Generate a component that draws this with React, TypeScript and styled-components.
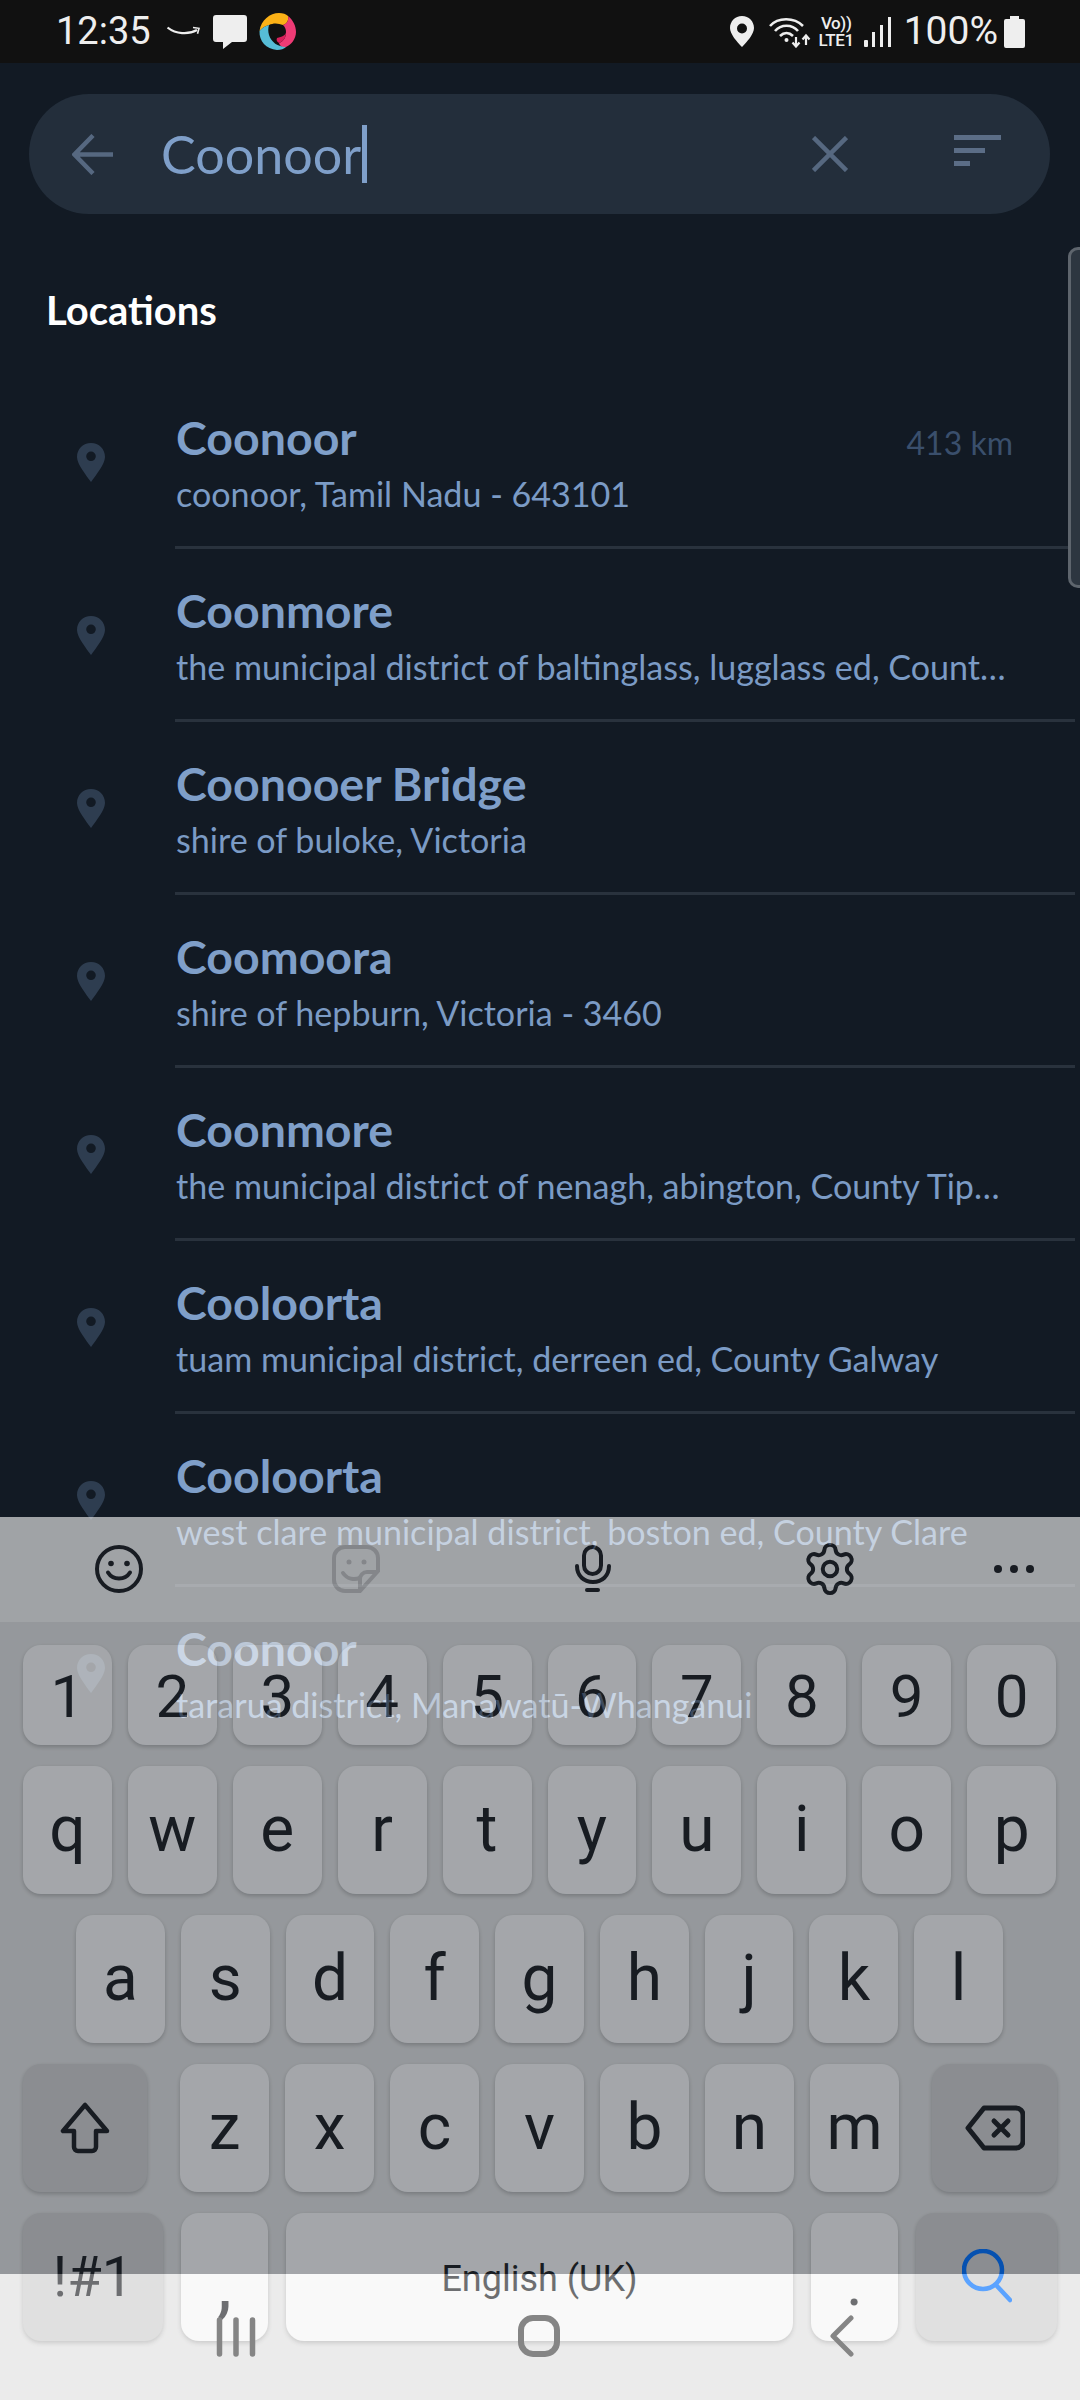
import React from "react";
import styled, { createGlobalStyle } from "styled-components";
import { Settings } from "lucide-react";

const Global = createGlobalStyle`
  html, body { margin: 0; padding: 0; background: #121a24; }
  body { width: 1080px; height: 2400px; overflow: hidden; font-family: "Lato", sans-serif; }
  * { box-sizing: border-box; }
`;

const Screen = styled.div`
  position: relative; width: 1080px; height: 2400px; overflow: hidden;
  display: flex; flex-direction: column; background: #121a24;
`;

/* status bar */
const StatusBar = styled.div`
  flex: 0 0 63px; height: 63px; background: #111111; display: flex; align-items: center;
  padding: 0 55px 0 56px; color: #eeeeee; font-family: "Roboto", sans-serif;
`;
const Clock = styled.span`font-size: 38px; line-height: 63px; margin-right: 18px; width: 93px;`;
const StatusLeft = styled.div`display: flex; align-items: center; gap: 13px;`;
const StatusRight = styled.div`margin-left: auto; display: flex; align-items: center;`;
const Percent = styled.span`font-size: 39px; line-height: 63px; margin: 0 6px 0 13px;`;
const Volte = styled.div`
  display: flex; flex-direction: column; align-items: center; width: 39px; margin-left: 6px;
  font-size: 17px; font-weight: 500; line-height: 17px; letter-spacing: -0.4px; margin-top: 1px;
`;

/* search */
const Content = styled.main`flex: 1 1 auto; display: flex; flex-direction: column; position: relative; overflow: hidden;`;
const SearchPill = styled.div`
  margin: 31px 0 0 29px; width: 1021px; height: 120px; border-radius: 60px; background: #232e3b;
  display: flex; align-items: center; position: relative; flex: 0 0 120px;
`;
const BackSlot = styled.div`width: 132px; padding-left: 43px; display: flex;`;
const Query = styled.div`
  font-size: 52px; color: #7f9fc9; line-height: 60px; display: flex; align-items: center; flex: 1;
`;
const Caret = styled.span`width: 5px; height: 58px; background: #7f9fc9; margin-left: 1px;`;
const ClearSlot = styled.div`width: 36px; margin-right: 106px; display: flex;`;
const FilterSlot = styled.div`width: 47px; margin-right: 49px; display: flex; flex-direction: column; gap: 8px; margin-top: -7px;`;
const FilterBar = styled.span<{ $w: number }>`display: block; height: 5px; width: ${p => p.$w}px; background: #5b6d86;`;

const Heading = styled.h2`
  margin: 73px 0 0 46px; font-size: 40px; font-weight: 700; color: #ffffff; line-height: 46px; height: 46px;
`;
const List = styled.div`display: flex; flex-direction: column; margin-top: 43px;`;
const Row = styled.div`display: flex; height: 173px; align-items: stretch;`;
const PinCell = styled.div`flex: 0 0 175px; padding-left: 77px; display: flex; align-items: center;`;
const RowBody = styled.div<{ $last?: boolean }>`
  flex: 1; min-width: 0; margin-right: 5px; padding: 33px 62px 0 1px;
  border-bottom: 3px solid ${p => (p.$last ? "transparent" : "#29323d")};
`;
const TitleLine = styled.div`display: flex; justify-content: space-between; align-items: baseline;`;
const Title = styled.div`font-size: 46.5px; font-weight: 700; color: #7f9fc9; line-height: 56px;`;
const Distance = styled.div`font-size: 32px; color: #3a4f6c; line-height: 40px; padding-top: 2px;`;
const Sub = styled.div`
  margin-top: 7px; font-size: 34.1px; color: #7b9bc5; line-height: 44px;
  white-space: nowrap; overflow: hidden; text-overflow: ellipsis;
`;

const ScrollThumb = styled.div`
  position: absolute; right: 0; top: 184px; width: 12px; height: 341px;
  background: #2d3640; border: 3px solid #5e656d; border-right: 0; border-radius: 10px 0 0 10px;
`;

/* bottom strip under keyboard */
const NavStrip = styled.div`flex: 0 0 126px; background: #ffffff;`;

/* keyboard, translucent over everything below */
const Keyboard = styled.div`
  position: absolute; left: 0; right: 0; top: 1517px; bottom: 0; opacity: 0.64; background: #e0e0e0;
  display: flex; flex-direction: column; font-family: "Roboto", sans-serif; color: #1c1e22;
`;
const Toolbar = styled.div`flex: 0 0 105px; background: #f0f0f0; display: flex; align-items: center; padding-bottom: 2px;`;
const ToolCell = styled.div<{ $w: number }>`
  flex: 0 0 ${p => p.$w}px; display: flex; justify-content: center; align-items: center; color: #1c1e22;
`;
const Rows = styled.div`display: flex; flex-direction: column; gap: 21px; padding-top: 23px;`;
const KeyRow = styled.div<{ $left: number; $right: number; $gap?: number }>`
  display: flex; gap: ${p => p.$gap ?? 16}px; padding: 0 ${p => p.$right}px 0 ${p => p.$left}px;
`;
const Key = styled.div<{ $h?: number; $w?: number; $dark?: boolean; $size?: number; $ml?: number; $drop?: number }>`
  flex: ${p => (p.$w ? `0 0 ${p.$w}px` : "1 1 0")};
  height: ${p => p.$h ?? 128}px; border-radius: 18px;
  margin-left: ${p => p.$ml ?? 0}px;
  padding-top: ${p => p.$drop ?? 0}px;
  background: ${p => (p.$dark ? "#cfcfcf" : "#f6f6f6")};
  box-shadow: 0 2px 4px rgba(0, 0, 0, 0.22);
  display: flex; align-items: center; justify-content: center;
  font-size: ${p => p.$size ?? 64}px; line-height: 1;
`;
const KeyGroup = styled.div`flex: 0 0 719px; display: flex; gap: 16px; margin-left: 33px;`;
const SpaceLabel = styled.span`font-size: 36px; padding-top: 4px;`;

const NavIcons = styled.div`
  position: absolute; left: 0; right: 0; bottom: 0; height: 126px; padding: 41px 0 0 84px;
  display: flex; align-items: flex-start;
`;
const NavCell = styled.div`flex: 0 0 303px; display: flex; justify-content: center;`;

const Pin = () => (
  <svg width="28" height="39" viewBox="0 0 28 39">
    <path fillRule="evenodd" d="M14 0C6 0 0 6 0 14c0 7 9 18 14 25 5-7 14-18 14-25C28 6 22 0 14 0zm0 8.500a4.800 4.800 0 1 1 0 9.600 4.800 4.800 0 0 1 0-9.600z" fill="#2e3d50" />
  </svg>
);

const rows = [
  { t: "Coonoor", s: "coonoor, Tamil Nadu - 643101", d: "413 km" },
  { t: "Coonmore", s: "the municipal district of baltinglass, lugglass ed, County Wicklow" },
  { t: "Coonooer Bridge", s: "shire of buloke, Victoria" },
  { t: "Coomoora", s: "shire of hepburn, Victoria - 3460" },
  { t: "Coonmore", s: "the municipal district of nenagh, abington, County Tipperary" },
  { t: "Cooloorta", s: "tuam municipal district, derreen ed, County Galway" },
  { t: "Cooloorta", s: "west clare municipal district, boston ed, County Clare" },
  { t: "Coonoor", s: "tararua district, Manawatū-Whanganui" },
];

const numbers = "1234567890".split("");
const top = "qwertyuiop".split("");
const mid = "asdfghjkl".split("");
const low = "zxcvbnm".split("");

export default function App() {
  return (
    <Screen>
      <Global />
      <StatusBar>
        <Clock>12:35</Clock>
        <StatusLeft>
          <svg width="33" height="12" viewBox="0 0 33 12" fill="none" stroke="#eee">
            <path d="M0.5 1.5C9 8 21 9 30 4" strokeWidth="2.2" />
            <path d="M26 1.5l6 .8-1.500 5.500" strokeWidth="1.6" />
          </svg>
          <svg width="34" height="34" viewBox="0 0 34 34">
            <path d="M3 0h28a3 3 0 0 1 3 3v21a3 3 0 0 1-3 3H19l-9 7v-7H3a3 3 0 0 1-3-3V3a3 3 0 0 1 3-3z" fill="#eeeeee" />
          </svg>
          <svg width="37" height="37" viewBox="0 0 37 37" style={{ marginLeft: -1 }}>
            <path d="M0.500 18C2 7 11 0 20 0c4 0 7 1 9 3 1 4-1 8-5 9-5-2-10-2-14 0-4 1-7 3-9.500 6z" fill="#fbb116" />
            <path d="M29 3c5 4 8 10 8 16 0 7-5 13-10 15-4 1-6-1-7-4 5-2 7-6 7-11 0-3-1-5-3-7 4-1 6-5 5-9z" fill="#ee3b75" />
            <path d="M20 30c5-2 7-6 7-11 0 3-4 5-9 6-1 2 0 4 2 5z" fill="#d81f5a" />
            <path d="M0.500 18C0 28 7 36 18 37c4 0 7-1 9-3-8 0-15-5-17-12-1-3-1-7 0-10-4 1-7 3-9.500 6z" fill="#56bcd6" />
          </svg>
        </StatusLeft>
        <StatusRight>
          <svg width="24" height="31" viewBox="0 0 24 31">
            <path fillRule="evenodd" d="M12 0C5 0 0 5.500 0 12c0 6 7 14 12 19 5-5 12-13 12-19C24 5.500 19 0 12 0zm0 7.500a5 5 0 1 1 0 10 5 5 0 0 1 0-10z" fill="#eeeeee" />
          </svg>
          <svg width="42" height="32" viewBox="0 0 42 32" fill="none" stroke="#eee" strokeWidth="2.600" style={{ marginLeft: 15 }}>
            <path d="M1 10C9 1 25 1 34 10" />
            <path d="M6 15C12 8 23 8 29 15" />
            <path d="M11 20c4-4 9-4 13 0" />
            <circle cx="17.500" cy="24" r="2" fill="#eee" stroke="none" />
            <path d="M27 21v9M23.500 26.500l3.500 4 3.500-4M37 29v-9M33.500 23.500l3.500-4 3.500 4" strokeWidth="2.200" />
          </svg>
          <Volte>
            <span>Vo))</span>
            <span>LTE1</span>
          </Volte>
          <svg width="27" height="30" viewBox="0 0 27 30" fill="#eee" style={{ marginLeft: 8 }}>
            <rect x="0" y="23" width="4" height="7" rx="1" />
            <rect x="8" y="15" width="3" height="15" />
            <rect x="16" y="8" width="3" height="22" />
            <rect x="24" y="0" width="3" height="30" />
          </svg>
          <Percent>100%</Percent>
          <svg width="21" height="32" viewBox="0 0 21 32" fill="#eeeeee">
            <path d="M6 0h9v3h4a2 2 0 0 1 2 2v25a2 2 0 0 1-2 2H2a2 2 0 0 1-2-2V5a2 2 0 0 1 2-2h4z" />
          </svg>
        </StatusRight>
      </StatusBar>

      <Content>
        <SearchPill>
          <BackSlot>
            <svg width="41" height="41" viewBox="0 0 41 41" fill="none" stroke="#566880" strokeWidth="4.500">
              <path d="M41 20.500H3M21 1.500L2.500 20.500 21 39.500" />
            </svg>
          </BackSlot>
          <Query>
            Coonoor<Caret />
          </Query>
          <ClearSlot>
            <svg width="36" height="36" viewBox="0 0 36 36" fill="none" stroke="#566880" strokeWidth="4.500">
              <path d="M1.500 1.500l33 33M34.500 1.500l-33 33" />
            </svg>
          </ClearSlot>
          <FilterSlot>
            <FilterBar $w={47} />
            <FilterBar $w={31} />
            <FilterBar $w={16} />
          </FilterSlot>
        </SearchPill>
        <Heading>Locations</Heading>
        <List>
          {rows.map((r, i) => (
            <Row key={i}>
              <PinCell>
                <Pin />
              </PinCell>
              <RowBody $last={i === rows.length - 1}>
                <TitleLine>
                  <Title>{r.t}</Title>
                  {r.d && <Distance>{r.d}</Distance>}
                </TitleLine>
                <Sub>{r.s}</Sub>
              </RowBody>
            </Row>
          ))}
        </List>
        <ScrollThumb />
      </Content>
      <NavStrip />

      <Keyboard>
        <Toolbar>
          <ToolCell $w={237}>
            <svg width="50" height="50" viewBox="0 0 50 50" fill="none" stroke="currentColor" strokeWidth="4">
              <circle cx="25" cy="25" r="22" />
              <circle cx="17" cy="19.500" r="2.800" fill="currentColor" stroke="none" />
              <circle cx="33" cy="19.500" r="2.800" fill="currentColor" stroke="none" />
              <path d="M14 28.500c5 8 17 8 22 0" strokeLinecap="round" />
            </svg>
          </ToolCell>
          <ToolCell $w={237}>
            <svg width="48" height="48" viewBox="0 0 48 48" fill="none" stroke="#c4c4c4" strokeWidth="4">
              <path d="M13 2h22a11 11 0 0 1 11 11v13L28 46H13A11 11 0 0 1 2 35V13A11 11 0 0 1 13 2z" />
              <path d="M45 27H35a7 7 0 0 0-7 7v11" />
              <circle cx="17" cy="17" r="2.500" fill="#c4c4c4" stroke="none" />
              <circle cx="32" cy="17" r="2.500" fill="#c4c4c4" stroke="none" />
              <path d="M11 28c4 6 11 7 17 5" strokeLinecap="round" />
            </svg>
          </ToolCell>
          <ToolCell $w={237}>
            <svg width="36" height="48" viewBox="0 0 36 48" fill="none" stroke="currentColor" strokeWidth="4" strokeLinecap="round">
              <rect x="9" y="2" width="17" height="27" rx="8.500" />
              <path d="M2 21c0 10 7 16 16 16s16-6 16-16" />
              <path d="M12 45h11" />
            </svg>
          </ToolCell>
          <ToolCell $w={237}>
            <Settings size={58} strokeWidth={1.65} />
          </ToolCell>
          <ToolCell $w={132}>
            <svg width="40" height="10" viewBox="0 0 40 10" fill="currentColor">
              <circle cx="4" cy="5" r="4" />
              <circle cx="20" cy="5" r="4" />
              <circle cx="36" cy="5" r="4" />
            </svg>
          </ToolCell>
        </Toolbar>
        <Rows>
          <KeyRow $left={23} $right={24}>
            {numbers.map(n => (
              <Key key={n} $h={100} $size={60} $drop={4}>{n}</Key>
            ))}
          </KeyRow>
          <KeyRow $left={23} $right={24}>
            {top.map(k => (
              <Key key={k}>{k}</Key>
            ))}
          </KeyRow>
          <KeyRow $left={76} $right={77}>
            {mid.map(k => (
              <Key key={k}>{k}</Key>
            ))}
          </KeyRow>
          <KeyRow $left={23} $right={23} $gap={0}>
            <Key $w={124} $dark>
              <svg width="50" height="52" viewBox="0 0 50 52" fill="none" stroke="currentColor" strokeWidth="4.500" strokeLinejoin="round">
                <path d="M25 3L3 29h11v16a4 4 0 0 0 4 4h14a4 4 0 0 0 4-4V29h11z" />
              </svg>
            </Key>
            <KeyGroup>
              {low.map(k => (
                <Key key={k}>{k}</Key>
              ))}
            </KeyGroup>
            <Key $w={125} $dark $ml={33}>
              <svg width="60" height="46" viewBox="0 0 60 46" fill="none" stroke="currentColor" strokeWidth="5" strokeLinejoin="round" strokeLinecap="round">
                <path d="M19 3h32a7 7 0 0 1 7 7v26a7 7 0 0 1-7 7H19L3 23z" />
                <path d="M29 16l14 14M43 16L29 30" />
              </svg>
            </Key>
          </KeyRow>
          <KeyRow $left={23} $right={23} $gap={18}>
            <Key $w={140} $dark $size={56}>!#1</Key>
            <Key $w={87} $size={76} $drop={12}>,</Key>
            <Key $w={507}><SpaceLabel>English (UK)</SpaceLabel></Key>
            <Key $w={87} $drop={14}>.</Key>
            <Key $w={141} $dark>
              <svg width="50" height="56" viewBox="0 0 50 56" fill="none" stroke="#0070ff" strokeWidth="4.500" strokeLinecap="round">
                <circle cx="21" cy="21" r="19" />
                <path d="M34 36l14 15" />
              </svg>
            </Key>
          </KeyRow>
        </Rows>
      </Keyboard>

      <NavIcons>
        <NavCell>
          <svg width="40" height="42" viewBox="0 0 40 42" stroke="#858585" strokeWidth="5.500" strokeLinecap="round">
            <path d="M3.500 5v34M20 5v34M36.500 5v34" />
          </svg>
        </NavCell>
        <NavCell>
          <svg width="58" height="42" viewBox="0 0 58 42" fill="none" stroke="#858585" strokeWidth="6">
            <rect x="11" y="3" width="36" height="36" rx="12" />
          </svg>
        </NavCell>
        <NavCell>
          <svg width="24" height="42" viewBox="0 0 24 42" fill="none" stroke="#858585" strokeWidth="5" strokeLinecap="round" strokeLinejoin="round">
            <path d="M21 3L3 21l18 18" />
          </svg>
        </NavCell>
      </NavIcons>
    </Screen>
  );
}
